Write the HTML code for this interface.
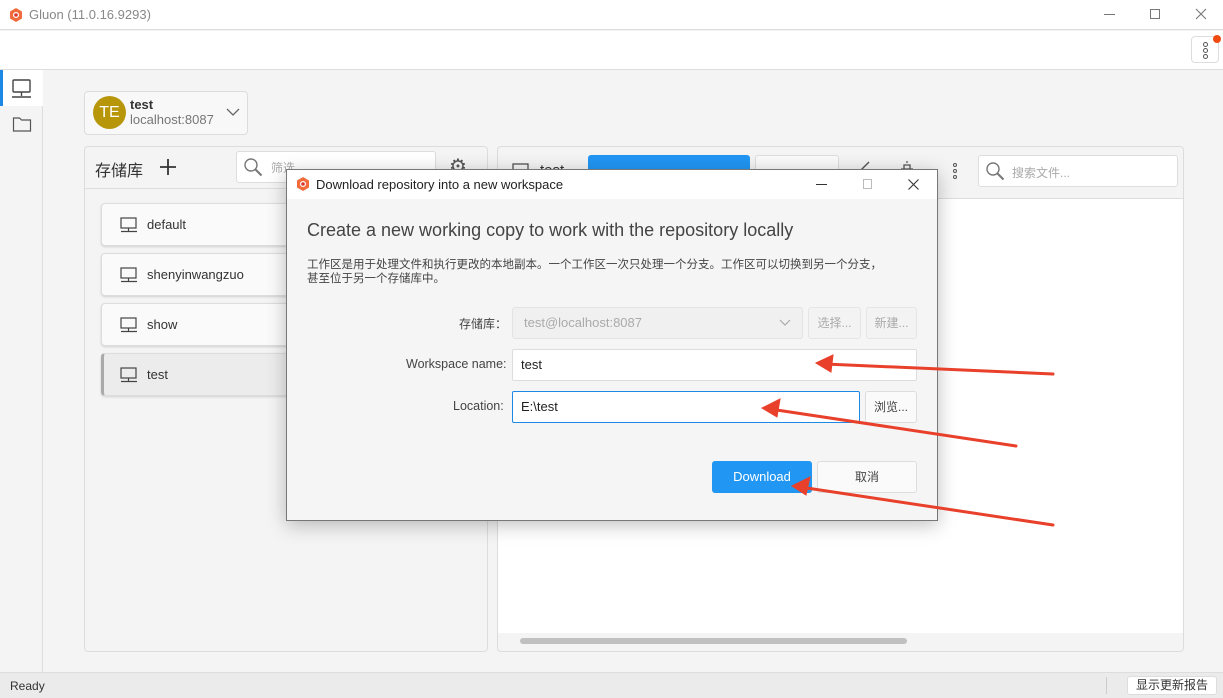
<!DOCTYPE html>
<html><head><meta charset="utf-8"><style>
*{box-sizing:border-box;margin:0;padding:0}
body{width:1223px;height:698px;position:relative;overflow:hidden;background:#f4f4f4;font-family:"Liberation Sans","Noto Sans CJK SC",sans-serif;color:#333;font-size:13px}
.a{position:absolute}
.box{position:absolute;border:1px solid #dcdcdc;border-radius:4px}
.item{position:absolute;left:101px;width:200px;height:43px;background:#fafafa;border:1px solid #ddd;border-radius:4px;box-shadow:0 1px 2px rgba(0,0,0,.15)}
.item span{position:absolute;left:45px;top:13px;font-size:13px;color:#333}
.item svg{position:absolute;left:18px;top:13px}
.btn{position:absolute;background:#fafafa;border:1px solid #ddd;border-radius:3px;font-size:12px;color:#444;text-align:center}
</style></head><body>
<!-- title bar -->
<div class="a" style="left:0;top:0;width:1223px;height:30px;background:#fff;border-bottom:1px solid #ddd"></div>
<svg class="a" style="left:8px;top:7px" width="16" height="16"><polygon points="8,1 14,4.5 14,11.5 8,15 2,11.5 2,4.5" fill="#f26b3a"/><circle cx="8" cy="8" r="3" fill="#fff"/><circle cx="8" cy="8" r="1.8" fill="#d9342b"/></svg>
<div class="a" style="left:29px;top:7px;font-size:13px;color:#888">Gluon (11.0.16.9293)</div>
<div class="a" style="left:1104px;top:14px;width:11px;height:1px;background:#777"></div>
<div class="a" style="left:1150px;top:9px;width:10px;height:10px;border:1px solid #777"></div>
<svg class="a" style="left:1195px;top:8px" width="12" height="12"><path d="M1 1l10 10M11 1L1 11" stroke="#777" stroke-width="1.1"/></svg>
<!-- toolbar -->
<div class="a" style="left:0;top:31px;width:1223px;height:39px;background:#fff;border-bottom:1px solid #ddd"></div>
<div class="a" style="left:1191px;top:36px;width:28px;height:27px;border:1px solid #ddd;border-radius:4px;background:#fff"></div>
<div class="a" style="left:1203px;top:42px;width:5px;height:5px;border:1px solid #555;border-radius:50%"></div>
<div class="a" style="left:1203px;top:48px;width:5px;height:5px;border:1px solid #555;border-radius:50%"></div>
<div class="a" style="left:1203px;top:54px;width:5px;height:5px;border:1px solid #555;border-radius:50%"></div>
<div class="a" style="left:1213px;top:35px;width:8px;height:8px;background:#f04a12;border-radius:50%"></div>
<!-- left sidebar -->
<div class="a" style="left:0;top:70px;width:43px;height:602px;background:#f4f4f4;border-right:1px solid #ddd"></div>
<div class="a" style="left:0;top:70px;width:43px;height:36px;background:#fff"></div>
<div class="a" style="left:0;top:70px;width:3px;height:36px;background:#1e88e5"></div>
<svg class="a" style="left:11px;top:79px" width="22" height="20"><rect x="2" y="1" width="17" height="12" rx="1" fill="none" stroke="#444" stroke-width="1.4"/><path d="M10.5 13v4M1 18h19" stroke="#444" stroke-width="1.4"/></svg>
<svg class="a" style="left:12px;top:115px" width="20" height="18"><path d="M1.5 3h6l2 2h9v11h-17z" fill="none" stroke="#555" stroke-width="1.2"/></svg>
<!-- account -->
<div class="box" style="left:84px;top:91px;width:164px;height:44px;background:#f8f8f8"></div>
<div class="a" style="left:93px;top:96px;width:33px;height:33px;border-radius:50%;background:#b8960a;color:#fff;font-size:16px;text-align:center;line-height:33px">TE</div>
<div class="a" style="left:130px;top:97px;font-weight:bold;font-size:13px">test</div>
<div class="a" style="left:130px;top:112px;color:#777;font-size:13px">localhost:8087</div>
<svg class="a" style="left:226px;top:108px" width="14" height="9"><path d="M1 1l6 6 6-6" fill="none" stroke="#666" stroke-width="1.3"/></svg>
<!-- left panel -->
<div class="box" style="left:84px;top:146px;width:404px;height:506px;background:#f4f4f4"></div>
<div class="a" style="left:85px;top:188px;width:402px;height:1px;background:#ddd"></div>
<div class="a" style="left:95px;top:157px;font-size:16px;color:#333">存储库</div>
<svg class="a" style="left:159px;top:158px" width="18" height="18"><path d="M9 1v16M1 9h16" stroke="#333" stroke-width="1.8"/></svg>
<div class="a" style="left:236px;top:151px;width:200px;height:32px;background:#fff;border:1px solid #ddd;border-radius:3px"></div>
<svg class="a" style="left:243px;top:157px" width="22" height="22"><circle cx="8" cy="8" r="6" fill="none" stroke="#777" stroke-width="1.4"/><path d="M12.5 12.5l6 6" stroke="#777" stroke-width="2"/></svg>
<div class="a" style="left:271px;top:159px;font-size:12px;color:#aaa">筛选</div>
<div class="a" style="left:449px;top:154px;font-size:20px;color:#555">⚙</div>
<div class="item" style="top:203px"><svg width="18" height="16"><rect x="1" y="1" width="15" height="10" fill="none" stroke="#444" stroke-width="1.2"/><path d="M8.5 11v3M1 14.5h16" stroke="#444" stroke-width="1.2"/></svg><span>default</span></div>
<div class="item" style="top:253px"><svg width="18" height="16"><rect x="1" y="1" width="15" height="10" fill="none" stroke="#444" stroke-width="1.2"/><path d="M8.5 11v3M1 14.5h16" stroke="#444" stroke-width="1.2"/></svg><span>shenyinwangzuo</span></div>
<div class="item" style="top:303px"><svg width="18" height="16"><rect x="1" y="1" width="15" height="10" fill="none" stroke="#444" stroke-width="1.2"/><path d="M8.5 11v3M1 14.5h16" stroke="#444" stroke-width="1.2"/></svg><span>show</span></div>
<div class="item" style="top:353px;background:#ececec;border-left:3px solid #aaa"><svg width="18" height="16" style="left:16px"><rect x="1" y="1" width="15" height="10" fill="none" stroke="#444" stroke-width="1.2"/><path d="M8.5 11v3M1 14.5h16" stroke="#444" stroke-width="1.2"/></svg><span style="left:43px">test</span></div>
<!-- right panel -->
<div class="box" style="left:497px;top:146px;width:687px;height:506px;background:#f4f4f4"></div>
<div class="a" style="left:498px;top:198px;width:685px;height:435px;background:#fff;border-top:1px solid #ddd"></div>
<div class="a" style="left:520px;top:638px;width:387px;height:6px;border-radius:3px;background:#c0c0c0"></div>
<svg class="a" style="left:512px;top:163px" width="18" height="16"><rect x="1" y="1" width="15" height="10" fill="none" stroke="#444" stroke-width="1.2"/></svg>
<div class="a" style="left:540px;top:162px;font-size:15px;color:#333">test</div>
<div class="a" style="left:588px;top:155px;width:162px;height:30px;background:#2196f3;border-radius:3px"></div>
<div class="btn" style="left:755px;top:155px;width:84px;height:30px"></div>
<svg class="a" style="left:858px;top:160px" width="14" height="12"><path d="M3 10l8-8" stroke="#555" stroke-width="1.4"/></svg>
<svg class="a" style="left:899px;top:161px" width="16" height="10"><path d="M2 8h12M5 8V4h6v4M7 1h2" stroke="#555" stroke-width="1.3" fill="none"/></svg>
<div class="a" style="left:953px;top:163px;width:4px;height:4px;border:1px solid #555;border-radius:50%"></div>
<div class="a" style="left:953px;top:169px;width:4px;height:4px;border:1px solid #555;border-radius:50%"></div>
<div class="a" style="left:953px;top:175px;width:4px;height:4px;border:1px solid #555;border-radius:50%"></div>
<div class="a" style="left:978px;top:155px;width:200px;height:32px;background:#fff;border:1px solid #ddd;border-radius:3px"></div>
<svg class="a" style="left:985px;top:161px" width="22" height="22"><circle cx="8" cy="8" r="6" fill="none" stroke="#777" stroke-width="1.4"/><path d="M12.5 12.5l6 6" stroke="#777" stroke-width="2"/></svg>
<div class="a" style="left:1012px;top:164px;font-size:12px;color:#aaa">搜索文件...</div>
<!-- status -->
<div class="a" style="left:0;top:672px;width:1223px;height:26px;background:#ebebeb;border-top:1px solid #ddd"></div>
<div class="a" style="left:10px;top:679px;font-size:12px;color:#333">Ready</div>
<div class="a" style="left:1106px;top:677px;width:1px;height:17px;background:#ccc"></div>
<div class="btn" style="left:1127px;top:676px;width:90px;height:19px;background:#fff;line-height:17px;color:#333">显示更新报告</div>
<!-- dialog -->
<div class="a" style="left:286px;top:169px;width:652px;height:352px;background:#f5f5f5;border:1px solid #777;box-shadow:0 4px 18px rgba(0,0,0,.25)"></div>
<div class="a" style="left:287px;top:170px;width:650px;height:29px;background:#fff"></div>
<svg class="a" style="left:295px;top:176px" width="16" height="16"><polygon points="8,1 14,4.5 14,11.5 8,15 2,11.5 2,4.5" fill="#f26b3a"/><circle cx="8" cy="8" r="3" fill="#fff"/><circle cx="8" cy="8" r="1.8" fill="#d9342b"/></svg>
<div class="a" style="left:316px;top:177px;font-size:13px;color:#222">Download repository into a new workspace</div>
<div class="a" style="left:816px;top:184px;width:11px;height:1px;background:#333"></div>
<div class="a" style="left:863px;top:179px;width:9px;height:10px;border:1px solid #bbb"></div>
<svg class="a" style="left:908px;top:179px" width="11" height="11"><path d="M0.5 0.5l10 10M10.5 0.5l-10 10" stroke="#333" stroke-width="1.1"/></svg>
<div class="a" style="left:307px;top:220px;font-size:18px;color:#444">Create a new working copy to work with the repository locally</div>
<div class="a" style="left:307px;top:258px;font-size:11.5px;color:#444;line-height:14px;width:620px">工作区是用于处理文件和执行更改的本地副本。一个工作区一次只处理一个分支。工作区可以切换到另一个分支，<br>甚至位于另一个存储库中。</div>
<div class="a" style="left:459px;top:315px;font-size:12px;color:#444">存储库：</div>
<div class="a" style="left:512px;top:307px;width:291px;height:32px;background:#f0f0f0;border:1px solid #e3e3e3;border-radius:3px"></div>
<div class="a" style="left:524px;top:315px;font-size:13px;color:#aaa">test@localhost:8087</div>
<svg class="a" style="left:779px;top:319px" width="12" height="8"><path d="M1 1l5 5 5-5" fill="none" stroke="#aaa" stroke-width="1.2"/></svg>
<div class="btn" style="left:808px;top:307px;width:53px;height:32px;line-height:30px;color:#aaa;background:#f3f3f3;border-color:#e5e5e5">选择...</div>
<div class="btn" style="left:866px;top:307px;width:51px;height:32px;line-height:30px;color:#aaa;background:#f3f3f3;border-color:#e5e5e5">新建...</div>
<div class="a" style="left:406px;top:357px;font-size:12.5px;color:#444">Workspace name:</div>
<div class="a" style="left:512px;top:349px;width:405px;height:32px;background:#fff;border:1px solid #ddd;border-radius:2px"></div>
<div class="a" style="left:521px;top:357px;font-size:13px;color:#222">test</div>
<div class="a" style="left:453px;top:399px;font-size:12.5px;color:#444">Location:</div>
<div class="a" style="left:512px;top:391px;width:348px;height:32px;background:#fff;border:1px solid #1e88e5;border-radius:2px"></div>
<div class="a" style="left:521px;top:399px;font-size:13px;color:#222">E:\test</div>
<div class="btn" style="left:865px;top:391px;width:52px;height:32px;line-height:30px">浏览...</div>
<div class="a" style="left:712px;top:461px;width:100px;height:32px;background:#2196f3;border-radius:3px;color:#fff;font-size:13px;text-align:center;line-height:32px">Download</div>
<div class="btn" style="left:817px;top:461px;width:100px;height:32px;line-height:30px;font-size:12px">取消</div>
<!-- arrows -->
<svg class="a" style="left:0;top:0" width="1223" height="698">
<g stroke="#e8402a" stroke-width="3" stroke-linecap="round" fill="#e8402a">
<line x1="1053" y1="374" x2="825" y2="364"/><polygon points="816,363 833,355 831,372" stroke-width="1"/>
<line x1="1016" y1="446" x2="770" y2="409"/><polygon points="762,408 780,399 777,417" stroke-width="1"/>
<line x1="1053" y1="525" x2="800" y2="487"/><polygon points="792,486 810,477 806,495" stroke-width="1"/>
</g></svg>
</body></html>
